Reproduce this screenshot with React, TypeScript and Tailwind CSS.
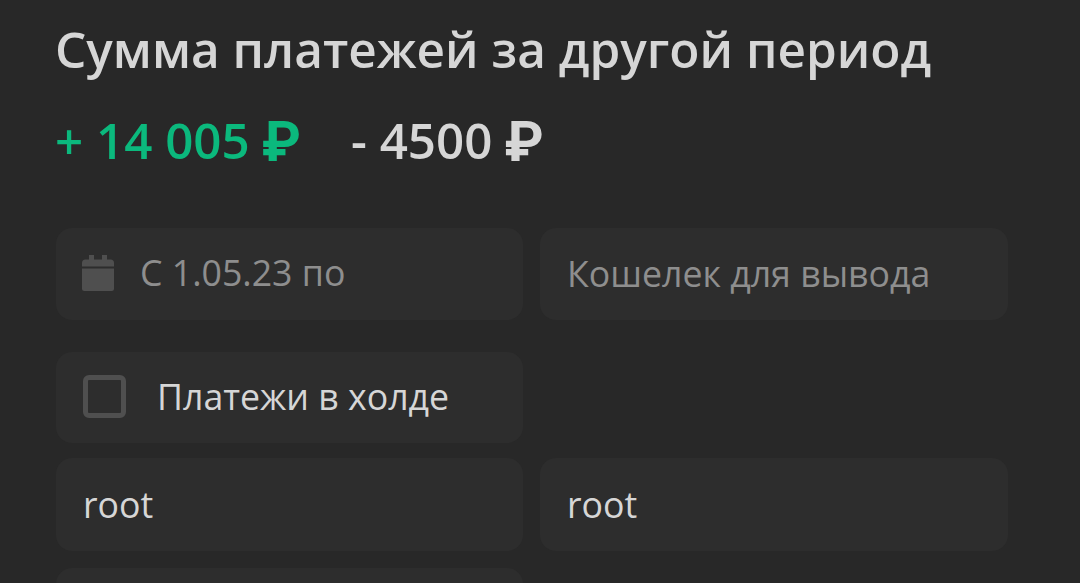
import type { ReactNode } from 'react';

function Ruble() {
  return (
    <span className="relative top-[2px] ml-3 inline-block font-['Roboto'] text-[55.5px] leading-none font-bold">
      ₽
    </span>
  );
}

function CalendarIcon() {
  return (
    <svg width="32" height="36" viewBox="0 0 32 36" fill="currentColor" className="block shrink-0">
      <path d="M7 0h5v4.500h8V0h5v4.500h3.500A3.500 3.500 0 0 1 32 8v3.500H0V8a3.500 3.500 0 0 1 3.500-3.500H7z" />
      <path d="M0 13.500h32V33.500a2.500 2.500 0 0 1-2.500 2.500h-27A2.500 2.500 0 0 1 0 33.500z" />
    </svg>
  );
}

interface FieldProps {
  children?: ReactNode;
  className?: string;
}

function Field({ children, className = '' }: FieldProps) {
  return (
    <div className={`flex items-center rounded-2xl bg-[#2d2d2d] px-[27px] ${className}`}>
      {children}
    </div>
  );
}

export default function App() {
  return (
    <div className="h-[583px] overflow-hidden bg-[#282828] pl-14 font-['Open_Sans','Noto_Sans',sans-serif] text-[35.7px] whitespace-nowrap text-[#d6d6d6]">
      <h1 className="-ml-px pt-[15px] text-[49.5px] leading-[68px] font-semibold">
        Сумма платежей за другой период
      </h1>
      <div className="mt-[23px] -ml-px flex h-[70px] text-[49.3px] leading-[68px] font-semibold">
        <span className="w-[296px] text-[#0bb97d]">
          + 14 005
          <Ruble />
        </span>
        <span>
          - 4500
          <Ruble />
        </span>
      </div>
      <div className="mt-[52px] flex gap-[17px]">
        <Field className="h-[92px] w-[467px] pb-0.5 text-[#8e8e8e]">
          <span className="-ml-px text-[#4f4f4f]">
            <CalendarIcon />
          </span>
          <span className="ml-[26px]">С 1.05.23 по</span>
        </Field>
        <Field className="h-[92px] w-[468px] text-[#8e8e8e]">Кошелек для вывода</Field>
      </div>
      <div className="mt-8">
        <Field className="h-[91px] w-[467px] pb-0.5">
          <span className="size-[43px] shrink-0 rounded-md border-[5px] border-[#4f4f4f]" />
          <span className="ml-[31px]">Платежи в холде</span>
        </Field>
      </div>
      <div className="mt-[15px] flex gap-[17px]">
        <Field className="h-[93px] w-[467px]">root</Field>
        <Field className="h-[93px] w-[468px]">root</Field>
      </div>
      <Field className="mt-[17px] h-[93px] w-[467px]" />
    </div>
  );
}
